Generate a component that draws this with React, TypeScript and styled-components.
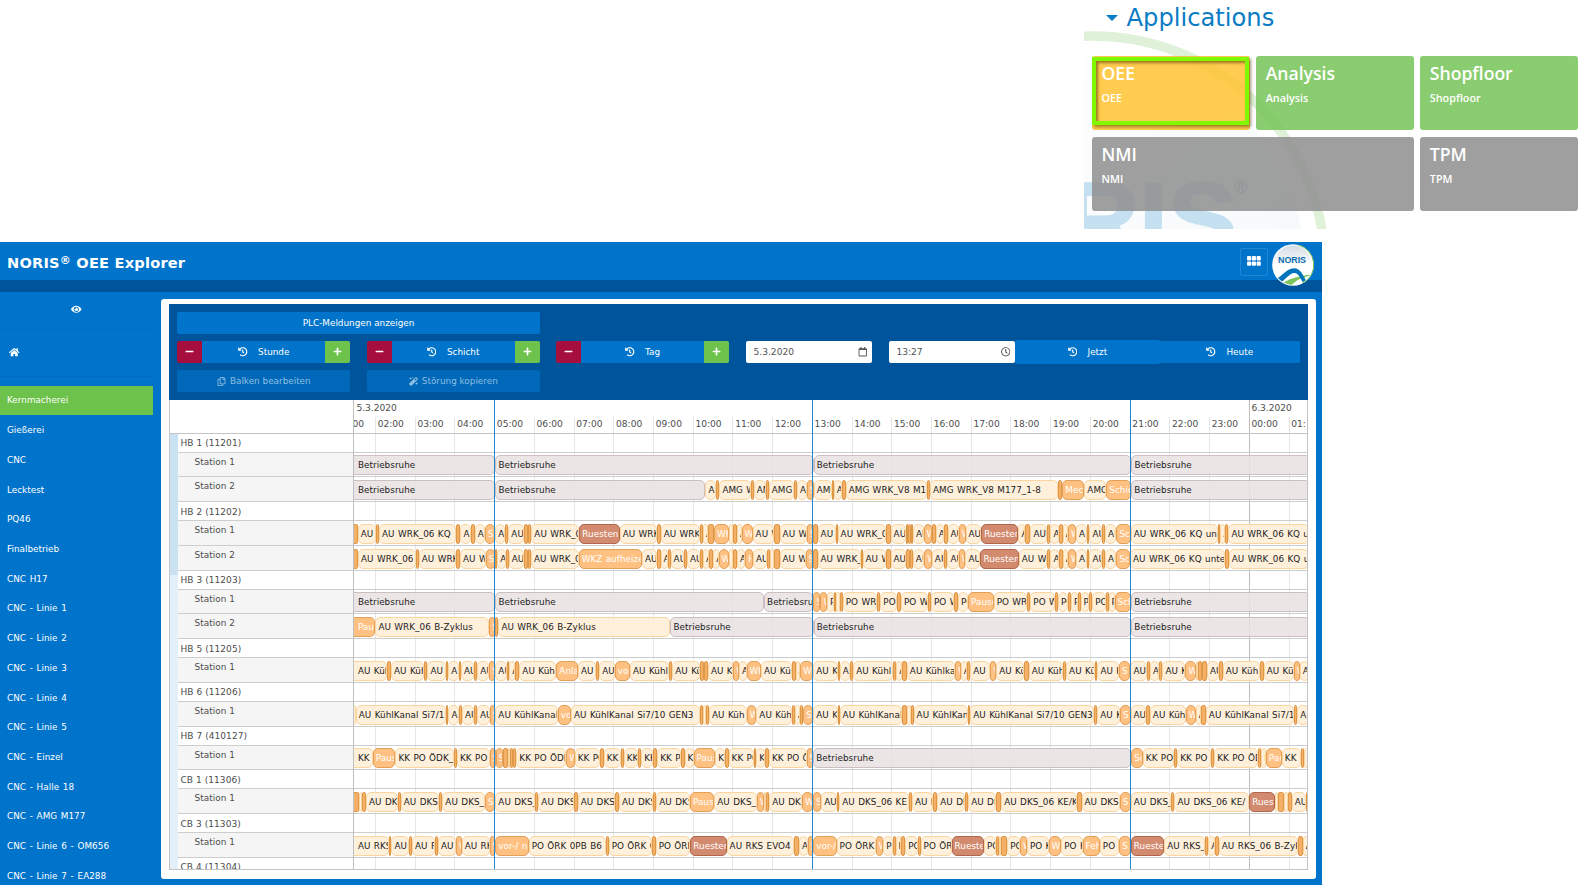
import React from "react";
import styled, { createGlobalStyle, css } from "styled-components";
import {
  FaEye,
  FaHome,
  FaHistory,
  FaMinus,
  FaPlus,
  FaRegCalendar,
  FaRegClock,
  FaRegCopy,
  FaMagic,
} from "react-icons/fa";

const GlobalStyle = createGlobalStyle`
  * { box-sizing: border-box; }
  body {
    margin: 0;
    background: #fff;
    font-family: "DejaVu Sans", Verdana, sans-serif;
    overflow: hidden;
  }
`;

const Page = styled.div`
  width: 1592px;
  height: 885px;
  display: flex;
  flex-direction: column;
  justify-content: space-between;
  overflow: hidden;
`;

/* ---------- Applications launcher ---------- */

const Launcher = styled.section`
  position: relative;
  width: 508px;
  height: 229px;
  margin-left: auto;
  padding: 0 14px 0 8px;
  overflow: hidden;
`;

const Watermark = styled.svg`
  position: absolute;
  inset: 0;
`;

const LauncherTitle = styled.h2`
  position: relative;
  margin: 0;
  height: 55.5px;
  padding: 2px 0 0 14px;
  display: flex;
  align-items: flex-start;
  font-size: 24.2px;
  line-height: 32px;
  font-weight: 400;
  color: #0a7cc4;
`;

const Caret = styled.span`
  width: 0;
  height: 0;
  margin: 13px 8.5px 0 0;
  border: 6px solid transparent;
  border-top-color: #0a7cc4;
  border-bottom-width: 0;
`;

const Tiles = styled.div`
  position: relative;
  display: grid;
  grid-template-columns: repeat(3, 1fr);
  grid-auto-rows: 74.5px;
  gap: 6.5px;
`;

const tileColors = {
  amber: "rgba(255, 196, 50, 0.86)",
  green: "rgba(119, 197, 88, 0.86)",
  gray: "rgba(143, 143, 143, 0.86)",
};

const Tile = styled.div<{ $tone: keyof typeof tileColors; $wide?: boolean }>`
  position: relative;
  grid-column: span ${(p) => (p.$wide ? 2 : 1)};
  padding: 5px 9.5px;
  border-radius: 3px;
  background: ${(p) => tileColors[p.$tone]};
  color: #fff;
  font-family: "Open Sans", "Noto Sans", sans-serif;
`;

const TileTitle = styled.div`
  font-size: 17.6px;
  line-height: 24px;
  font-weight: 600;
`;

const TileText = styled.div`
  font-size: 10.8px;
  line-height: 25px;
  font-weight: 600;
`;

const Focus = styled.div`
  position: absolute;
  inset: 1px 0.5px 5px 0;
  border: 4px solid #80f800;
  box-shadow: 2px 2px 3px rgba(80, 60, 0, 0.55), inset 2px 2px 3px rgba(90, 60, 0, 0.6);
`;

/* ---------- Explorer shell ---------- */

const Explorer = styled.main`
  width: 1322px;
  height: 643px;
  background: #0074cb;
  color: #fff;
  display: flex;
  flex-direction: column;
`;

const TopBar = styled.header`
  flex: none;
  height: 37.5px;
  padding: 0 8.5px 0 7px;
  display: flex;
  align-items: center;
  justify-content: space-between;
`;

const Brand = styled.h1`
  margin: 4px 0 0;
  font-size: 14.6px;
  letter-spacing: 0.2px;
  line-height: 20px;
  font-weight: 700;
  white-space: nowrap;
  sup {
    font-size: 11px;
    line-height: 0;
    vertical-align: 4px;
  }
`;

const TopActions = styled.div`
  display: flex;
  align-items: flex-start;
  gap: 3.5px;
  height: 100%;
  padding-top: 1.5px;
`;

const AppsButton = styled.button`
  width: 28px;
  height: 28px;
  margin: 4px 0 0;
  padding: 0 0 2px;
  display: grid;
  place-items: center;
  border: 1px solid #2086d3;
  border-radius: 2px;
  background: transparent;
`;

const LogoBadge = styled.svg`
  position: relative;
  z-index: 2;
  flex: none;
`;

const Band = styled.div`
  flex: none;
  height: 12px;
  background: #00549c;
`;

const Content = styled.div`
  flex: 1;
  min-height: 0;
  display: flex;
  justify-content: space-between;
  padding-right: 6px;
`;

const Sidebar = styled.nav`
  width: 152.5px;
  overflow: hidden;
  font-size: 8.8px;
`;

const SideIcon = styled.div<{ $height: number; $center?: boolean }>`
  height: ${(p) => p.$height}px;
  padding: ${(p) => (p.$center ? "0 0 2px" : "0 0 0 9px")};
  display: flex;
  align-items: center;
  justify-content: ${(p) => (p.$center ? "center" : "flex-start")};
  border-bottom: 1px solid #006bc0;
`;

const SideList = styled.div`
  padding-top: 9px;
`;

const SideItem = styled.a<{ $active?: boolean }>`
  height: 29.72px;
  padding-left: 7px;
  display: flex;
  align-items: center;
  word-spacing: 0.9px;
  letter-spacing: 0.03px;
  white-space: nowrap;
  background: ${(p) => (p.$active ? "#6cc24a" : "transparent")};
`;

const Card = styled.section`
  width: 1155px;
  height: 580.5px;
  margin-top: 7px;
  padding: 5.5px 8px 9px;
  border-radius: 3px;
  background: #fff;
`;

const CardInner = styled.div`
  height: 566px;
  display: flex;
  flex-direction: column;
`;

/* ---------- Toolbar ---------- */

const Toolbar = styled.div`
  flex: none;
  height: 96px;
  padding: 8px 8.3px;
  display: flex;
  flex-direction: column;
  gap: 7.7px;
  background: #00549c;
  font-size: 8.85px;
`;

const ToolRow = styled.div`
  height: 21.5px;
  display: flex;
  align-items: center;
`;

const Button = styled.button<{ $width: number; $muted?: boolean; $raised?: boolean; $gap?: number }>`
  width: ${(p) => p.$width}px;
  height: ${(p) => (p.$raised ? 24 : 21.5)}px;
  padding: 0;
  display: flex;
  align-items: center;
  justify-content: center;
  gap: ${(p) => p.$gap ?? 10.5}px;
  border: 0;
  border-radius: 2px;
  background: ${(p) => (p.$muted ? "#0068b8" : "#0074cb")};
  color: ${(p) => (p.$muted ? "#8fbfe4" : "#fff")};
  font: inherit;
`;

const Stepper = styled.div`
  width: 173px;
  height: 100%;
  display: flex;
  border-radius: 2px;
  overflow: hidden;
  background: #0074cb;
`;

const StepButton = styled.button<{ $kind: "minus" | "plus" }>`
  width: 25px;
  padding: 0;
  border: 0;
  display: grid;
  place-items: center;
  color: #fff;
  background: ${(p) => (p.$kind === "minus" ? "#a60f3d" : "#6cc24a")};
`;

const StepLabel = styled.div`
  flex: 1;
  display: flex;
  align-items: center;
  justify-content: center;
  gap: 10.5px;
`;

const Field = styled.div`
  width: 126px;
  height: 100%;
  padding: 0 4.5px 0 7.5px;
  display: flex;
  align-items: center;
  justify-content: space-between;
  border-radius: 2px;
  background: #fff;
  color: #555;
  font-size: 9.1px;
`;

const Gap = styled.span<{ $w: number }>`
  flex: none;
  width: ${(p) => p.$w}px;
`;

/* ---------- Timeline ---------- */

const HOUR = 39.73;
const UNIT = 1 / 3;
const ROW = { machine: 19, station: 24.75 };

const Chart = styled.div`
  flex: 1;
  min-height: 0;
  display: flex;
  border: 1px solid #c4c4c4;
  border-top: 0;
  overflow: hidden;
  color: #4d4d4d;
`;

const LabelPane = styled.div`
  flex: none;
  width: 184.4px;
  border-right: 1px solid #bfbfbf;
`;

const LabelHead = styled.div`
  height: 33.5px;
  border-bottom: 1px solid #c4c4c4;
`;

const LabelBody = styled.div`
  display: flex;
`;

const Strip = styled.div`
  flex: none;
  width: 7.5px;
  height: 437px;
  background: #e3f0f9;
`;

const StripActive = styled.div`
  height: 141px;
  background: #cbe2f3;
`;

const LabelRows = styled.div`
  flex: 1;
`;

const rowLine = css<{ $kind: keyof typeof ROW }>`
  height: ${(p) => ROW[p.$kind]}px;
  border-bottom: 1px solid #cdcdcd;
`;

const Label = styled.div<{ $kind: keyof typeof ROW }>`
  ${rowLine}
  padding: ${(p) => (p.$kind === "machine" ? "3.5px 0 0 3px" : "3px 0 0 17px")};
  font-size: ${(p) => (p.$kind === "machine" ? 9 : 8.9)}px;
  letter-spacing: 0.06px;
  line-height: 13px;
  background: ${(p) => (p.$kind === "machine" ? "#fff" : "#f5f5f5")};
`;

const Canvas = styled.div`
  position: relative;
  flex: 1;
  min-width: 0;
  overflow: hidden;
`;

const Overlay = styled.div`
  position: absolute;
  inset: 0;
  display: flex;
`;

const GridHour = styled.div<{ $w: number; $major?: boolean }>`
  flex: none;
  width: ${(p) => p.$w}px;
  margin-top: ${(p) => (p.$major ? 0 : 17)}px;
  border-right: 1px solid ${(p) => (p.$major ? "#bdbdbd" : "#e6e6e6")};
`;

const ShiftSpan = styled.div<{ $w: number }>`
  flex: none;
  width: ${(p) => p.$w}px;
  border-right: 1px solid #1f86d2;
`;

const Axis = styled.div`
  position: relative;
  height: 33.5px;
  border-bottom: 1px solid #c4c4c4;
  font-size: 9.1px;
`;

const AxisDates = styled.div`
  display: flex;
  height: 17px;
  line-height: 17px;
`;

const AxisDate = styled.div<{ $w: number }>`
  flex: none;
  width: ${(p) => p.$w}px;
  padding-left: 2px;
`;

const AxisHours = styled.div`
  display: flex;
  line-height: 15.5px;
`;

const AxisHour = styled.div<{ $w: number }>`
  flex: none;
  width: ${(p) => p.$w}px;
  padding-left: ${(p) => (p.$w < 30 ? 0 : 2)}px;
  text-indent: ${(p) => (p.$w < 30 ? -2 : 0)}px;
  white-space: nowrap;
  overflow: hidden;
`;

const Lane = styled.div<{ $kind: keyof typeof ROW }>`
  ${rowLine}
  position: relative;
  display: flex;
  padding-top: 2.75px;
`;

type Kind = "b" | "o" | "s" | "t" | "r";

const barSkin: Record<Kind, { bg: string; line: string; ink: string }> = {
  b: { bg: "rgba(232, 225, 225, 0.86)", line: "#cdbfc1", ink: "#222" },
  o: { bg: "rgba(255, 238, 216, 0.9)", line: "#fbd5a0", ink: "#222" },
  s: { bg: "rgba(255, 190, 123, 0.95)", line: "#e2a058", ink: "#fff" },
  t: { bg: "#f3b066", line: "#df9848", ink: "#fff" },
  r: { bg: "rgba(210, 135, 106, 0.97)", line: "#b0674c", ink: "#fff" },
};

const Bar = styled.div<{ $kind: Kind; $first: boolean }>`
  flex: none;
  height: 20px;
  text-indent: ${(p) => (p.$first ? 3.5 : 2)}px;
  border: 1px solid ${(p) => barSkin[p.$kind].line};
  border-radius: ${(p) => (p.$kind === "t" ? 2 : 5)}px;
  ${(p) => p.$first && "border-left: 0; border-top-left-radius: 0; border-bottom-left-radius: 0;"}
  background: ${(p) => barSkin[p.$kind].bg};
  color: ${(p) => barSkin[p.$kind].ink};
  font-size: 8.8px;
  letter-spacing: 0.06px;
  word-spacing: 0.5px;
  line-height: 19px;
  white-space: nowrap;
  overflow: hidden;
`;

/* Bars are "start kind text": the start counts in half minutes from the left edge;
   every bar runs to the start of the next one. */
const END = 2866;

type Station = { name: string; bars: string };
type Machine = { name: string; stations: Station[] };

const machines: Machine[] = [
  {
    name: "HB 1 (11201)",
    stations: [
      { name: "Station 1", bars: "0b Betriebsruhe|423b Betriebsruhe|1378b Betriebsruhe|2331b Betriebsruhe" },
      {
        name: "Station 2",
        bars: "0b Betriebsruhe|423b Betriebsruhe|1053o AM|1085t|1095o AMG WR|1189t|1198o AMG|1235t|1243o AMG|1318t|1328o AM|1358s S|1378o AMG|1432t|1438o AM|1463t|1474o AMG WRK_V8 M17|1717t|1727o AMG WRK_V8 M177_1-8|2111t|2124s Mech|2190o AMG|2256s Schic|2331b Betriebsruhe",
      },
    ],
  },
  {
    name: "HB 2 (11202)",
    stations: [
      {
        name: "Station 1",
        bars: "0t|10o AU|64t|74o AU WRK_06 KQ|305t|318o A|349t|361o A|392s S|423o A|453t|462o AU|510t|520t|531o AU WRK_06|675r Ruesten|796o AU WRK|908t|919o AU WRK|1037t|1046o A|1060t|1079s WK|1125o|1137t|1148o A|1162s W|1195o AU W|1260t|1276o AU W|1358s S|1376t|1390o AU|1444t|1450o AU WRK_0|1595t|1609o AU|1654t|1662t|1669t|1676o AU|1708s W|1733t|1745o A|1769t|1780o AU|1814s W|1834o AU|1881r Ruesten|1993o A|2013t|2029o AU|2078t|2089o A|2116t|2126o A|2142s W|2166o A|2198t|2206o AU|2244t|2253o AU|2287s Sc|2330o AU WRK_06 KQ unt|2591t|2599o A|2612t|2623o AU WRK_06 KQ un",
      },
      {
        name: "Station 2",
        bars: "0t|11o AU WRK_06|184t|193o AU WRK|306t|317o AU W|394s S|422t|429o A|456t|463o AU|510t|521t|530o AU WRK_06|673s WKZ aufheizen|863o AU|908t|919o A|940t|949o AU|988t|998o AU|1037t|1046o A|1064t|1077o A|1093s W|1125o A|1137t|1148o A|1173s H|1196o AU|1239t|1247o A|1260t|1276o AU W|1355s S|1376t|1390o AU WRK_|1519t|1525o AU W|1595t|1609o AU|1654t|1667t|1676o AU|1710s W|1733o AU|1769t|1780o AU|1814s W|1834o AU|1879r Ruesten|1994o AU W|2078t|2089o A|2116t|2126o A|2142s W|2166o A|2198t|2206o AU|2244t|2253o AU|2287s Sc|2328o AU WRK_06 KQ unte|2613t|2624o AU WRK_06 KQ un",
      },
    ],
  },
  {
    name: "HB 3 (11203)",
    stations: [
      {
        name: "Station 1",
        bars: "0b Betriebsruhe|423b Betriebsruhe|1229b Betriebsruhe|1377s S|1398s W|1418o P|1439t|1446o|1456t|1465o PO WRK|1569t|1578o PO|1627t|1640o PO W|1722t|1730o PO W|1798t|1811o PO|1841s Pause|1918o PO WR|2019t|2028o PO W|2103t|2111o PO|2140t|2150o P|2170t|2179o P|2205t|2214o PO|2256t|2263o P|2281s Sch|2331b Betriebsruhe",
      },
      {
        name: "Station 2",
        bars: "0s Paus|63o AU WRK_06 B-Zyklus|405s S|422t|432o AU WRK_06 B-Zyklus|948b Betriebsruhe|1378b Betriebsruhe|2331b Betriebsruhe",
      },
    ],
  },
  {
    name: "HB 5 (11205)",
    stations: [
      {
        name: "Station 1",
        bars: "0o AU Küh|98t|110o AU Küh|210t|219o AU|274t|282o A|313t|320o AU|360t|369o AU|405s S|423o AU|458t|465o A|481t|495o AU Kühl|606s Anlauf|671o AU|725t|735o AU|781s vor|827o AU Kühl|943t|954o AU Kü|1036t|1049t|1061o AU K|1137s W|1154o A|1177s WK|1220o AU Kü|1314t|1324o A|1338s W|1377o AU K|1450t|1457o A|1488t|1497o AU Kühl|1615t|1626o A|1643t|1658o AU Kühlkana|1803s W|1820o A|1838t|1848o AU K|1909s W|1926o AU Kü|2011t|2024o AU Küh|2127t|2136o AU Kü|2222t|2230o AU K|2295s S|2329o AU|2379t|2388o A|2416t|2425o AU K|2494s W|2526o|2532t|2545t|2559o AU|2594t|2606o AU Küh|2719t|2729o AU Kü|2819s W|2837o A",
      },
    ],
  },
  {
    name: "HB 6 (11206)",
    stations: [
      {
        name: "Station 1",
        bars: "0o|4o AU KühlKanal Si7/1|274t|282o A|315t|323o AU|359t|368o AU|406s S|423o AU KühlKanal|610s vo|650o AU KühlKanal Si7/10 GEN3|1037t|1046o|1055t|1064o AU Küh|1177s W|1206o AU Küh|1312t|1322o A|1336t|1347s S|1377o AU K|1450t|1456o AU KühlKanal|1644t|1658o A|1670t|1678o AU KühlKanal|1842t|1848o AU KühlKanal Si7/10 GEN3|2220t|2229o AU K|2297s S|2329o AU|2376t|2387o AU Küh|2494s W|2525o A|2539t|2555o AU KühlKanal Si7/1|2821t|2829o A",
      },
    ],
  },
  {
    name: "HB 7 (410127)",
    stations: [
      {
        name: "Station 1",
        bars: "0o KK|55s Pause|123o KK PO ÖDK_|298t|308o KK PO|406s S|424s S|446t|460o|468t|476t|486o KK PO ÖDK|636s W|661o KK PO|738t|748o KK|799t|808o KK|852t|861o KK|895t|909o KK P|979t|991o K|1018s Paus|1083o K|1111t|1123o KK PO|1198t|1206o K|1233t|1244o KK PO Ö|1357s S|1377b Betriebsruhe|2331s Sc|2366o KK PO|2460t|2469o KK PO|2571t|2580o KK PO ÖD|2710t|2721o K|2735s Pau|2783o KK|2841t|2850o",
      },
    ],
  },
  {
    name: "CB 1 (11306)",
    stations: [
      {
        name: "Station 1",
        bars: "0t|15o|24t|35o AU DKS|130t|139o AU DKS|255t|264o AU DKS_|392s S|423o AU DKS_|541t|552o AU DKS|660t|670o AU DKS|782t|794o AU DKS|895t|906o AU DKS|1007s Paus|1080o AU DKS_|1208s W|1228o|1235t|1245o AU DK|1343s W|1377s S|1401o AU|1447t|1455o AU DKS_06 KE|1663t|1673o AU D|1737t|1749o AU DK|1831t|1842o AU DK|1925t|1941o AU DKS_06 KE/K|2167t|2182o AU DKS|2297s S|2330o AU DKS_|2451t|2461o AU DKS_06 KE/|2685r Ruest|2762o|2773t|2789o A|2803t|2813o AU|2855t",
      },
    ],
  },
  {
    name: "CB 3 (11303)",
    stations: [
      {
        name: "Station 1",
        bars: "0o AU RKS|103t|111o AU|163t|173o AU R|241t|251o AU|304s W|322o AU RK|406s S|423s vor-/ na|523o PO ÖRK 0PB B6 K|756t|763o PO ÖRK 0|894t|904o PO ÖRK|1008r Ruesten|1117o AU RKS EVO4|1318t|1334o A|1361s S|1377s vor-/|1447o PO ÖRK|1564s W|1587o P|1615t|1624o P|1639t|1653o PO|1690t|1699o PO ÖR|1792r Rueste|1889o PO|1925t|1934o|1941t|1959o PO|1997s W|2018o PO K|2083s W|2121o PO K|2185s Feh|2237o PO|2295s S|2330r Rueste|2430o AU RKS_|2554t|2562o A|2584t|2594o AU RKS_06 B-Zyk|2833t|2846o A",
      },
    ],
  },
];

const parseBars = (source: string) =>
  source.split("|").map((part) => {
    const [, start, kind, text] = /^(\d+)([bostr]) ?(.*)$/.exec(part)!;
    return { start: Number(start), kind: kind as Kind, text };
  });

const hours = [
  "02", "03", "04", "05", "06", "07", "08", "09", "10", "11", "12", "13",
  "14", "15", "16", "17", "18", "19", "20", "21", "22", "23", "00",
];

const areas = [
  "Kernmacherei", "Gießerei", "CNC", "Lecktest", "PQ46", "Finalbetrieb", "CNC H17",
  "CNC - Linie 1", "CNC - Linie 2", "CNC - Linie 3", "CNC - Linie 4", "CNC - Linie 5",
  "CNC - Einzel", "CNC - Halle 18", "CNC - AMG M177", "CNC - Linie 6 - OM656",
  "CNC - Linie 7 - EA288",
];

function StationLane({ bars }: { bars: string }) {
  const items = parseBars(bars);
  return (
    <Lane $kind="station">
      {items.map((bar, i) => {
        const end = i + 1 < items.length ? items[i + 1].start : END;
        return (
          <Bar
            key={bar.start}
            $kind={bar.kind}
            $first={bar.start === 0}
            style={{ width: (end - bar.start) * UNIT }}
          >
            {bar.text}
          </Bar>
        );
      })}
    </Lane>
  );
}

function Timeline() {
  return (
    <Chart>
      <LabelPane>
        <LabelHead />
        <LabelBody>
          <Strip>
            <StripActive />
          </Strip>
          <LabelRows>
            {machines.map((m) => (
              <React.Fragment key={m.name}>
                <Label $kind="machine">{m.name}</Label>
                {m.stations.map((s) => (
                  <Label key={s.name} $kind="station">
                    {s.name}
                  </Label>
                ))}
              </React.Fragment>
            ))}
            <Label $kind="machine">CB 4 (11304)</Label>
          </LabelRows>
        </LabelBody>
      </LabelPane>
      <Canvas>
        <Overlay>
          <GridHour $w={21.6} />
          {hours.map((h) => (
            <GridHour key={h} $w={HOUR} $major={h === "23"} />
          ))}
        </Overlay>
        <Axis>
          <AxisDates>
            <AxisDate $w={895}>5.3.2020</AxisDate>
            <AxisDate $w={58}>6.3.2020</AxisDate>
          </AxisDates>
          <AxisHours>
            <AxisHour $w={21.3}>00</AxisHour>
            {hours.map((h) => (
              <AxisHour key={h} $w={HOUR}>
                {h}:00
              </AxisHour>
            ))}
            <AxisHour $w={HOUR}>01:</AxisHour>
          </AxisHours>
        </Axis>
        {machines.map((m) => (
          <React.Fragment key={m.name}>
            <Lane $kind="machine" />
            {m.stations.map((s) => (
              <StationLane key={s.name} bars={s.bars} />
            ))}
          </React.Fragment>
        ))}
        <Overlay>
          <ShiftSpan $w={140.6} />
          <ShiftSpan $w={HOUR * 8} />
          <ShiftSpan $w={HOUR * 8} />
        </Overlay>
      </Canvas>
    </Chart>
  );
}

function StepperControl({ label }: { label: string }) {
  return (
    <Stepper>
      <StepButton $kind="minus">
        <FaMinus size={9} />
      </StepButton>
      <StepLabel>
        <FaHistory size={9.5} />
        {label}
      </StepLabel>
      <StepButton $kind="plus">
        <FaPlus size={9} />
      </StepButton>
    </Stepper>
  );
}

function NorisLogo() {
  return (
    <LogoBadge width="42" height="42" viewBox="0 0 42 42">
      <defs>
        <linearGradient id="badge" x1="0" y1="0" x2="0" y2="1">
          <stop offset="0" stopColor="#d3dce4" />
          <stop offset="0.5" stopColor="#fff" />
        </linearGradient>
        <clipPath id="badgeClip">
          <circle cx="21" cy="21" r="19.8" />
        </clipPath>
      </defs>
      <circle cx="21" cy="21" r="20.8" fill="#fff" />
      <path d="M26 1A20.5 20.5 0 0 1 30 39.5" fill="none" stroke="#7cc35c" strokeWidth="1" />
      <circle cx="21" cy="21" r="19.4" fill="url(#badge)" />
      <g clipPath="url(#badgeClip)">
        <path d="M8 41C16 35 26 31.5 41 30.5C32 33 24 37 19 42Z" fill="#7fc35c" />
        <path d="M20 41C23 37.5 26 35.5 30 34L34 41Z" fill="#fff" />
        <path d="M3 35.5C10 33 14 24.5 22 24.3C28.5 24.2 30.5 31 34.5 37L31 38.5C27.5 33 26.5 29.3 22.5 29C17.5 28.8 12.5 37 7.5 39.5Z" fill="#0073bd" />
      </g>
      <text x="6" y="19" fontFamily="Liberation Sans, Arial, sans-serif" fontWeight="700" fontSize="8.4" fill="#0a6cb0" textLength="28" lengthAdjust="spacingAndGlyphs">
        NORIS
      </text>
    </LogoBadge>
  );
}

export default function App() {
  return (
    <Page>
      <GlobalStyle />
      <Launcher>
        <Watermark width="508" height="229" viewBox="0 0 508 229">
          <defs>
            <linearGradient id="globe" x1="0" y1="0" x2="1" y2="1">
              <stop offset="0" stopColor="#fff" />
              <stop offset="1" stopColor="#f3f7fa" />
            </linearGradient>
          </defs>
          <circle cx="9" cy="268" r="212" fill="url(#globe)" />
          <circle cx="9" cy="268" r="232" fill="none" stroke="#dff1d9" strokeWidth="9.5" />
          <text x="-20" y="255" fontFamily="Liberation Sans, Arial, sans-serif" fontWeight="700" fontSize="104" fill="#c5e0f0" stroke="#c5e0f0" strokeWidth="2">
            RIS
          </text>
          <text x="150" y="192.5" fontFamily="Liberation Sans, Arial, sans-serif" fontSize="18" fill="#8fb9d2">
            ®
          </text>
        </Watermark>
        <LauncherTitle>
          <Caret />
          Applications
        </LauncherTitle>
        <Tiles>
          <Tile $tone="amber">
            <TileTitle>OEE</TileTitle>
            <TileText>OEE</TileText>
            <Focus />
          </Tile>
          <Tile $tone="green">
            <TileTitle>Analysis</TileTitle>
            <TileText>Analysis</TileText>
          </Tile>
          <Tile $tone="green">
            <TileTitle>Shopfloor</TileTitle>
            <TileText>Shopfloor</TileText>
          </Tile>
          <Tile $tone="gray" $wide>
            <TileTitle>NMI</TileTitle>
            <TileText>NMI</TileText>
          </Tile>
          <Tile $tone="gray">
            <TileTitle>TPM</TileTitle>
            <TileText>TPM</TileText>
          </Tile>
        </Tiles>
      </Launcher>

      <Explorer>
        <TopBar>
          <Brand>
            NORIS<sup>®</sup> OEE Explorer
          </Brand>
          <TopActions>
            <AppsButton aria-label="Apps">
              <svg width="14" height="10" viewBox="0 0 14 10" fill="#fff">
                {[0, 4.8, 9.6].map((x) =>
                  [0, 5.4].map((y) => <rect key={`${x}-${y}`} x={x} y={y} width="4.2" height="4.4" rx="1" />)
                )}
              </svg>
            </AppsButton>
            <NorisLogo />
          </TopActions>
        </TopBar>
        <Band />
        <Content>
          <Sidebar>
            <SideIcon $height={38} $center>
              <FaEye size={10.5} />
            </SideIcon>
            <SideIcon $height={47}>
              <FaHome size={10.5} />
            </SideIcon>
            <SideList>
              {areas.map((area, i) => (
                <SideItem key={area} $active={i === 0}>
                  {area}
                </SideItem>
              ))}
            </SideList>
          </Sidebar>
          <Card>
            <CardInner>
              <Toolbar>
                <ToolRow>
                  <Button $width={362.5}>PLC-Meldungen anzeigen</Button>
                </ToolRow>
                <ToolRow>
                  <StepperControl label="Stunde" />
                  <Gap $w={16.5} />
                  <StepperControl label="Schicht" />
                  <Gap $w={16.5} />
                  <StepperControl label="Tag" />
                  <Gap $w={17} />
                  <Field>
                    5.3.2020
                    <FaRegCalendar size={9.5} />
                  </Field>
                  <Gap $w={17} />
                  <Field>
                    13:27
                    <FaRegClock size={9.5} />
                  </Field>
                  <Button $width={145} $raised>
                    <FaHistory size={9.5} />
                    Jetzt
                  </Button>
                  <Button $width={140}>
                    <FaHistory size={9.5} />
                    Heute
                  </Button>
                </ToolRow>
                <ToolRow>
                  <Button $width={173} $muted $gap={4}>
                    <FaRegCopy size={9} />
                    Balken bearbeiten
                  </Button>
                  <Gap $w={16.5} />
                  <Button $width={173} $muted $gap={4}>
                    <FaMagic size={9} />
                    Störung kopieren
                  </Button>
                </ToolRow>
              </Toolbar>
              <Timeline />
            </CardInner>
          </Card>
        </Content>
      </Explorer>
    </Page>
  );
}
